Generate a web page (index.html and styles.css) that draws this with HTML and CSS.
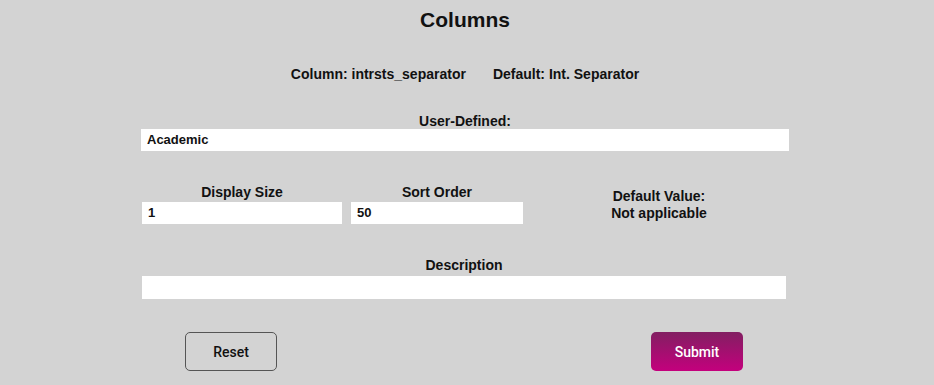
FILE: index.html
```html
<!DOCTYPE html>
<html>
<head>
<meta charset="utf-8">
<link rel="stylesheet" href="styles.css">
</head>
<body>
<div class="page">
  <h1 class="title">Columns</h1>
  <div class="info">
    <span>Column: intrsts_separator</span>
    <span>Default: Int. Separator</span>
  </div>
  <div class="form">
    <div class="field">
      <label class="label">User-Defined:</label>
      <div class="input wide">Academic</div>
    </div>
    <div class="row">
      <div class="field size">
        <label class="label">Display Size</label>
        <div class="input">1</div>
      </div>
      <div class="field sort">
        <label class="label">Sort Order</label>
        <div class="input">50</div>
      </div>
      <div class="defval">
        <div>Default Value:</div>
        <div>Not applicable</div>
      </div>
    </div>
    <div class="field desc">
      <label class="label">Description</label>
      <div class="input descin"></div>
    </div>
    <div class="buttons">
      <button class="btn reset">Reset</button>
      <button class="btn submit">Submit</button>
    </div>
  </div>
</div>
</body>
</html>
```
FILE: styles.css
```css
html, body {
  margin: 0;
  padding: 0;
  background: #d3d3d3;
}
body {
  width: 934px;
  height: 385px;
  overflow: hidden;
  font-family: "Liberation Sans", Arial, sans-serif;
  color: #111;
}
.page {
  display: flex;
  flex-direction: column;
  align-items: center;
  padding-right: 4px;
}
.title {
  margin: 8px 0 0;
  font-size: 21px;
  font-weight: bold;
  line-height: 24px;
  height: 24px;
}
.info {
  margin-top: 34px;
  display: flex;
  gap: 27px;
  font-size: 14px;
  font-weight: bold;
  line-height: 16px;
}
.form {
  width: 648px;
  margin-top: 31px;
  display: flex;
  flex-direction: column;
}
.field {
  display: flex;
  flex-direction: column;
  align-items: center;
}
.label {
  font-size: 14px;
  font-weight: bold;
  line-height: 16px;
  height: 16px;
}
.input {
  background: #fff;
  height: 22px;
  line-height: 22px;
  box-sizing: border-box;
  padding-left: 6px;
  font-size: 13px;
  font-weight: bold;
  font-family: "Liberation Sans", Arial, sans-serif;
  align-self: stretch;
}
.wide {
  width: 648px;
}
.row {
  margin-top: 33px;
  display: flex;
  padding-left: 1px;
}
.size {
  width: 200px;
}
.sort {
  width: 172px;
  margin-left: 9px;
}
.size .label, .sort .label {
  height: 18px;
}
.defval {
  width: 200px;
  margin-left: 36px;
  padding-top: 4px;
  display: flex;
  flex-direction: column;
  align-items: center;
  font-size: 14px;
  font-weight: bold;
  line-height: 17px;
}
.desc {
  margin-top: 33px;
  padding-left: 1px;
  width: 644px;
}
.desc .label {
  height: 19px;
}
.descin {
  height: 23px;
}
.buttons {
  margin-top: 33px;
  display: flex;
  justify-content: space-between;
  padding: 0 46px 0 44px;
}
.btn {
  width: 92px;
  height: 39px;
  box-sizing: border-box;
  border-radius: 5px;
  font-family: Roboto, "Liberation Sans", sans-serif;
  font-weight: 500;
  font-size: 14px;
  cursor: pointer;
}
.reset {
  background: transparent;
  border: 1px solid #555;
  color: #111;
}
.submit {
  border: none;
  color: #fff;
  background: linear-gradient(to bottom, #821f62, #c4007d);
}
```
